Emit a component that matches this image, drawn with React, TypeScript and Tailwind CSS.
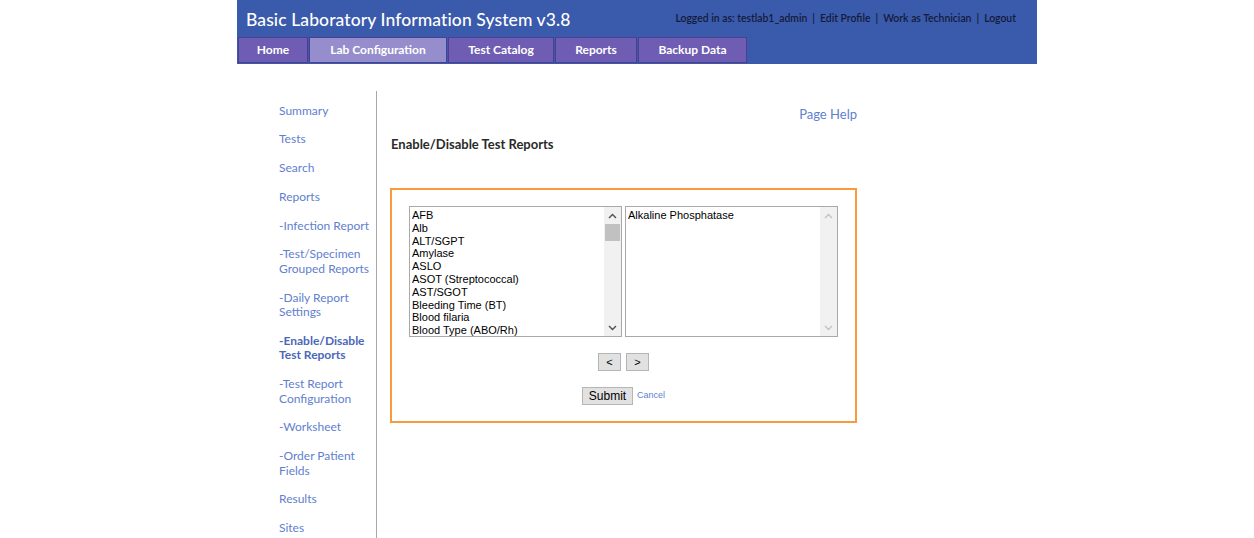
import React from "react";

const tabs = [
  { label: "Home", w: "w-[70px]" },
  { label: "Lab Configuration", w: "w-[138px]", active: true },
  { label: "Test Catalog", w: "w-[106px]" },
  { label: "Reports", w: "w-[82px]" },
  { label: "Backup Data", w: "w-[109px]" },
];

const side: { lines: string[]; bold?: boolean }[] = [
  { lines: ["Summary"] },
  { lines: ["Tests"] },
  { lines: ["Search"] },
  { lines: ["Reports"] },
  { lines: ["-Infection Report"] },
  { lines: ["-Test/Specimen", "Grouped Reports"] },
  { lines: ["-Daily Report", "Settings"] },
  { lines: ["-Enable/Disable", "Test Reports"], bold: true },
  { lines: ["-Test Report", "Configuration"] },
  { lines: ["-Worksheet"] },
  { lines: ["-Order Patient", "Fields"] },
  { lines: ["Results"] },
  { lines: ["Sites"] },
];

const tests = [
  "AFB",
  "Alb",
  "ALT/SGPT",
  "Amylase",
  "ASLO",
  "ASOT (Streptococcal)",
  "AST/SGOT",
  "Bleeding Time (BT)",
  "Blood filaria",
  "Blood Type (ABO/Rh)",
];

function Chevron({ up, light }: { up?: boolean; light?: boolean }) {
  return (
    <svg width="9" height="6" viewBox="0 0 9 6">
      <path
        d={up ? "M1 5 L4.5 1.5 L8 5" : "M1 1 L4.5 4.5 L8 1"}
        fill="none"
        stroke={light ? "#c3c3c3" : "#505050"}
        strokeWidth="1.4"
      />
    </svg>
  );
}

function ListBox({
  items,
  thumb,
  light,
}: {
  items: string[];
  thumb?: boolean;
  light?: boolean;
}) {
  return (
    <div className="flex h-[131px] w-[213px] border border-[#a9a9a9] bg-white">
      <div className="flex-1 overflow-hidden pl-[2px] pt-[2px] text-[11px] leading-[12.8px] text-black [font-family:'Liberation_Sans',Arial,sans-serif]">
        {items.map((t) => (
          <div key={t} className="whitespace-nowrap">
            {t}
          </div>
        ))}
      </div>
      <div className="flex w-[17px] flex-col bg-[#f1f1f1]">
        <div className="flex h-[17px] items-center justify-center">
          <Chevron up light={light} />
        </div>
        <div className="flex-1">
          {thumb && <div className="mx-[1px] h-[17px] bg-[#c1c1c1]" />}
        </div>
        <div className="flex h-[17px] items-center justify-center">
          <Chevron light={light} />
        </div>
      </div>
    </div>
  );
}

function Sep() {
  return <span className="px-[5px]">|</span>;
}

export default function App() {
  return (
    <div className="min-h-[538px] bg-white [font-family:Lato,'Open_Sans',sans-serif]">
      <div className="ml-[237px] w-[800px]">
        {/* Header */}
        <div className="h-[64px] bg-[#3a5aab] pl-px">
          <div className="flex h-[37px] items-center justify-between pl-[8px] pr-[21px] pt-[3px]">
            <div className="text-[17.5px] font-medium tracking-[0.1px] text-white">
              Basic Laboratory Information System v3.8
            </div>
            <div className="pb-[2px] text-[10.4px] font-semibold text-[#141a3c]">
              Logged in as: testlab1_admin
              <Sep />
              Edit Profile
              <Sep />
              Work as Technician
              <Sep />
              Logout
            </div>
          </div>
          <div className="flex h-[26px] gap-[1px]">
            {tabs.map((t) => (
              <div
                key={t.label}
                className={`${t.w} flex items-center justify-center border border-[#4d3f8f] text-[12px] font-bold text-white ${
                  t.active ? "bg-[#958dcc]" : "bg-[#6e5db3]"
                }`}
              >
                {t.label}
              </div>
            ))}
          </div>
        </div>

        {/* Body */}
        <div className="mt-[27px] flex">
          <div className="w-[140px] border-r border-[#a8a8a8] pl-[42px] pt-[12.5px]">
            <div className="flex flex-col gap-[14.4px] pb-[4px]">
              {side.map((s) => (
                <div
                  key={s.lines.join()}
                  className={`text-[12px] leading-[14.4px] ${
                    s.bold ? "font-bold text-[#4b68b8]" : "text-[#5f80cf]"
                  }`}
                >
                  {s.lines.map((l) => (
                    <div key={l} className="whitespace-nowrap">
                      {l}
                    </div>
                  ))}
                </div>
              ))}
            </div>
          </div>

          <div className="w-[480px] pl-[13px]">
            <div className="pt-[14px] text-right text-[13px] text-[#5f80cf]">Page Help</div>
            <div className="ml-px mt-[10px] text-[13px] font-bold text-[#2a2a2a]">
              Enable/Disable Test Reports
            </div>
            <div className="mt-[34px] border-2 border-[#f89b3c] px-[17px] pb-[16px] pt-[16px]">
              <div className="flex gap-[3px]">
                <ListBox items={tests} thumb />
                <ListBox items={["Alkaline Phosphatase"]} light />
              </div>
              <div className="mt-[16px] flex justify-center gap-[5px] [font-family:'Liberation_Sans',Arial,sans-serif]">
                <div className="flex h-[18px] w-[23px] items-center justify-center border border-[#b5b5b5] bg-[#e1e1e1] text-[11px] text-black">
                  &lt;
                </div>
                <div className="flex h-[18px] w-[23px] items-center justify-center border border-[#b5b5b5] bg-[#e1e1e1] text-[11px] text-black">
                  &gt;
                </div>
              </div>
              <div className="mt-[16px] flex items-center justify-center gap-[4px] [font-family:'Liberation_Sans',Arial,sans-serif]">
                <div className="flex h-[18px] w-[51px] items-center justify-center border border-[#b5b5b5] bg-[#e1e1e1] text-[12px] text-black">
                  Submit
                </div>
                <div className="text-[9px] text-[#5f80cf]">Cancel</div>
              </div>
            </div>
          </div>
        </div>
      </div>
    </div>
  );
}
